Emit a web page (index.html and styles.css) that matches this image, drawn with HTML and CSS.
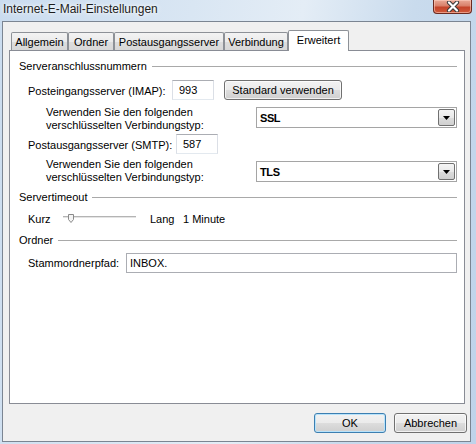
FILE: index.html
```html
<!DOCTYPE html>
<html lang="de">
<head>
<meta charset="utf-8">
<title>Internet-E-Mail-Einstellungen</title>
<link rel="stylesheet" href="styles.css">
</head>
<body>
<div class="window">
  <div class="titlebar">
    <span class="title">Internet-E-Mail-Einstellungen</span>
    <div class="close">
      <svg width="16" height="11" viewBox="0 0 16 11">
        <path d="M4 1.5 L12 9.5 M12 1.5 L4 9.5" stroke="#3a3a3a" stroke-width="4.2" stroke-linecap="round" fill="none"/>
        <path d="M4 1.5 L12 9.5 M12 1.5 L4 9.5" stroke="#ffffff" stroke-width="2.2" stroke-linecap="round" fill="none"/>
      </svg>
    </div>
  </div>
  <div class="client">
    <div class="tabs">
      <div class="tab t1">Allgemein</div>
      <div class="tab t2">Ordner</div>
      <div class="tab t3">Postausgangsserver</div>
      <div class="tab t4">Verbindung</div>
      <div class="tab active t5">Erweitert</div>
    </div>
    <div class="panel">
      <div class="group g1"><span class="gtext">Serveranschlussnummern</span><div class="rule"></div></div>
      <div class="row r-imap">
        <span class="lbl lbl-imap">Posteingangsserver (IMAP):</span>
        <div class="field f-imap">993</div>
        <div class="btn btn-std">Standard verwenden</div>
      </div>
      <div class="row r-ver r-ver1">
        <div class="vtext">Verwenden Sie den folgenden<br>verschlüsselten Verbindungstyp:</div>
        <div class="combo c1"><span class="ctext">SSL</span><span class="drop"><svg width="7" height="4" viewBox="0 0 7 4"><path d="M0 0 H7 L3.5 4 Z" fill="#000"/></svg></span></div>
      </div>
      <div class="row r-smtp">
        <span class="lbl lbl-smtp">Postausgangsserver (SMTP):</span>
        <div class="field f-smtp">587</div>
      </div>
      <div class="row r-ver r-ver2">
        <div class="vtext">Verwenden Sie den folgenden<br>verschlüsselten Verbindungstyp:</div>
        <div class="combo c2"><span class="ctext">TLS</span><span class="drop"><svg width="7" height="4" viewBox="0 0 7 4"><path d="M0 0 H7 L3.5 4 Z" fill="#000"/></svg></span></div>
      </div>
      <div class="group g2"><span class="gtext">Servertimeout</span><div class="rule"></div></div>
      <div class="row r-slider">
        <span class="lbl lbl-kurz">Kurz</span>
        <div class="slider">
          <div class="track"></div>
          <svg class="thumb" width="6" height="9" viewBox="0 0 6 9"><path d="M0.5 0.5 H5.5 V5.5 L3 8.5 L0.5 5.5 Z" fill="#f4f4f4" stroke="#8a8a8a" stroke-width="1"/></svg>
        </div>
        <span class="lbl lbl-lang">Lang</span>
        <span class="lbl">1 Minute</span>
      </div>
      <div class="group g3"><span class="gtext">Ordner</span><div class="rule"></div></div>
      <div class="row r-ordner">
        <span class="lbl lbl-path">Stammordnerpfad:</span>
        <div class="field f-path">INBOX.</div>
      </div>
    </div>
    <div class="footer">
      <div class="btn btn-ok">OK</div>
      <div class="btn btn-cancel">Abbrechen</div>
    </div>
  </div>
</div>
</body>
</html>
```
FILE: styles.css
```css
* { box-sizing: border-box; }
html, body { margin: 0; padding: 0; }
body {
  width: 476px;
  height: 444px;
  overflow: hidden;
  font-family: "Liberation Sans", Arial, sans-serif;
  font-size: 11px;
  color: #000;
  background: #c3d7ec;
}
.window {
  width: 476px;
  height: 444px;
  display: flex;
  flex-direction: column;
  background: linear-gradient(100deg, #cadcef 0%, #d9e6f3 35%, #e4edf6 55%, #c9dbed 75%, #bfd3ea 100%);
}
.titlebar {
  height: 21px;
  display: flex;
  align-items: flex-start;
  position: relative;
}
.title {
  margin-left: 3px;
  margin-top: 2px;
  font-size: 12px;
  line-height: 14px;
  color: #1c1c1c;
  text-shadow: 0 0 6px #ffffff, 0 0 3px #ffffff;
}
.close {
  position: absolute;
  left: 433px;
  top: 0;
  width: 39px;
  height: 14px;
  border: 1px solid #6b2a20;
  border-top: none;
  border-radius: 0 0 4px 4px;
  background: linear-gradient(#e9a996 0%, #d9806a 45%, #c4442a 55%, #d0593b 100%);
  box-shadow: inset 0 0 0 1px rgba(255, 210, 195, 0.55);
  display: flex;
  justify-content: center;
  align-items: center;
}
.client {
  margin-left: 2px;
  width: 469px;
  height: 421px;
  border: 1px solid #7b8592;
  background: #f0f0f0;
  display: flex;
  flex-direction: column;
}
.tabs {
  margin-top: 8px;
  margin-left: 8px;
  height: 20px;
  display: flex;
  align-items: flex-end;
  position: relative;
  z-index: 2;
}
.tab {
  height: 18px;
  border: 1px solid #8d9197;
  border-bottom: none;
  border-radius: 2px 2px 0 0;
  background: linear-gradient(#f3f3f3 0%, #ebebeb 50%, #dddddd 51%, #d8d8d8 100%);
  display: flex;
  justify-content: center;
  align-items: center;
  padding-top: 2px;
  line-height: 13px;
}
.t1 { width: 57px; }
.t2 { width: 46px; }
.t3 { width: 110px; }
.t4 { width: 64px; }
.t5 { width: 61px; }
.tab.active {
  height: 21px;
  margin-bottom: -1px;
  background: #ffffff;
  padding-top: 0;
  padding-bottom: 2px;
}
.panel {
  margin-left: 6px;
  width: 456px;
  height: 354px;
  border: 1px solid #898c95;
  background: #ffffff;
  padding: 8px 7px 0 9px;
  display: flex;
  flex-direction: column;
}
.group {
  height: 14px;
  display: flex;
  align-items: center;
}
.gtext { line-height: 13px; }
.rule {
  flex: 1;
  height: 1px;
  margin-left: 5px;
  background: #a9a9a9;
}
.g2 { margin-top: 6px; }
.g3 { margin-top: 6px; }
.row {
  display: flex;
  align-items: center;
}
.lbl { line-height: 13px; white-space: nowrap; }
.r-imap { margin-top: 7px; height: 20px; padding-left: 9px; }
.lbl-imap { width: 144px; padding-top: 2px; }
.field {
  height: 20px;
  border: 1px solid #abadb3;
  border-left-color: #dbdfe6;
  border-right-color: #dbdfe6;
  border-bottom-color: #e3e9ef;
  background: #fff;
  line-height: 18px;
  padding-left: 6px;
}
.f-imap { width: 42px; }
.f-smtp { width: 42px; }
.btn {
  height: 20px;
  border: 1px solid #707070;
  border-radius: 3px;
  background: linear-gradient(#f2f2f2 0%, #ebebeb 50%, #dddddd 51%, #cfcfcf 100%);
  box-shadow: inset 0 0 0 1px rgba(255, 255, 255, 0.7);
  display: flex;
  justify-content: center;
  align-items: center;
  line-height: 13px;
}
.btn-std { margin-left: 10px; width: 118px; }
.r-ver { height: 26px; padding-left: 27px; align-items: flex-start; }
.r-ver1 { margin-top: 6px; }
.r-ver2 { margin-top: 4px; }
.vtext { width: 210px; line-height: 13px; white-space: nowrap; }
.combo {
  width: 201px;
  height: 21px;
  border: 1px solid #a5a5a5;
  background: #fff;
  display: flex;
  align-items: center;
  justify-content: space-between;
  padding: 0 1px 0 3px;
}
.c1 { margin-top: 1px; }
.c2 { margin-top: 3px; }
.ctext {
  font-size: 11px;
  font-weight: bold;
  letter-spacing: -0.4px;
}
.drop {
  width: 17px;
  height: 17px;
  border: 1px solid #707070;
  border-radius: 2px;
  background: linear-gradient(#f4f4f4 0%, #e9e9e9 50%, #dcdcdc 51%, #d0d0d0 100%);
  display: flex;
  justify-content: center;
  align-items: center;
  padding-top: 1px;
}
.r-smtp { margin-top: 2px; height: 20px; padding-left: 9px; }
.lbl-smtp { width: 148px; padding-top: 2px; }
.r-slider { margin-top: 7px; height: 16px; padding-left: 9px; }
.lbl-kurz { width: 35px; }
.slider {
  width: 73px;
  height: 16px;
  position: relative;
  display: flex;
  align-items: center;
}
.track {
  width: 73px;
  height: 3px;
  margin-top: -3px;
  border-top: 1px solid #b4b4b4;
  border-bottom: 1px solid #ffffff;
  background: #e4e4e4;
}
.thumb {
  position: absolute;
  left: 5px;
  top: 3px;
}
.lbl-lang { margin-left: 14px; width: 33px; }
.r-ordner { margin-top: 6px; height: 20px; padding-left: 9px; }
.lbl-path { width: 98px; }
.f-path {
  flex: 1;
  border-color: #abadb3;
  padding-left: 3px;
}
.footer {
  display: flex;
  justify-content: flex-end;
  padding-right: 3px;
  margin-top: 9px;
}
.btn-ok {
  width: 72px;
  border-color: #3c7fb1;
  box-shadow: inset 0 0 0 1px #b8e3fb;
}
.btn-cancel { width: 73px; margin-left: 8px; }
```
